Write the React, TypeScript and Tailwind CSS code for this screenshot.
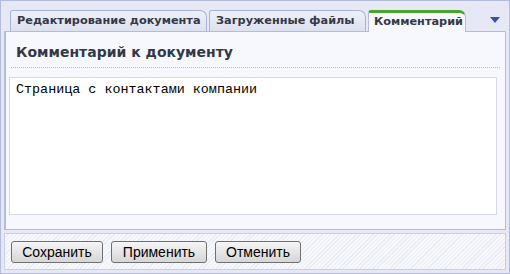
import React from 'react';

const tabs = [
  { label: 'Редактирование документа', w: 'w-[197px]' },
  { label: 'Загруженные файлы', w: 'w-[157px]' },
  { label: 'Комментарий', w: 'w-[98px]' },
];

export default function App() {
  const active = 2;
  return (
    <div className="w-[510px] h-[274px] bg-[#e6e9f5] border border-[#b4bcdb] flex flex-col" style={{ fontFamily: '"DejaVu Sans", Verdana, sans-serif' }}>
      <div className="flex items-end h-[30px] pl-[9px] pr-[6px] gap-[2px]">
        {tabs.map((t, i) =>
          i === active ? (
            <div key={t.label} className={`${t.w} relative -mb-px z-10 h-[22px] pl-[5px] flex items-center bg-[#f7f8fd] border-x border-[#b4bcdb] border-t-[3px] border-t-[#4aa52a] rounded-tl-[3px] rounded-tr-[7px] text-[11.3px] font-bold text-[#343947] whitespace-nowrap`}>
              {t.label}
            </div>
          ) : (
            <div key={t.label} className={`${t.w} h-[21px] pl-[6px] flex items-center bg-gradient-to-b from-[#eef0f8] to-[#dde1ef] border border-b-0 border-[#a9b2d3] rounded-tl-[3px] rounded-tr-[7px] text-[11.3px] font-bold text-[#343947] whitespace-nowrap`}>
              {t.label}
            </div>
          )
        )}
        <div className="ml-auto mb-[8px] mr-[3px]">
          <svg width="10" height="6" viewBox="0 0 10 6">
            <path d="M0 0 H10 L5 6 Z" fill="#2f58a8" />
          </svg>
        </div>
      </div>
      <div className="mx-[3px] h-[199px] bg-[#f7f8fd] border border-[#b4bcdb] border-l-2 flex flex-col px-[3px]">
        <div className="pt-[10px] pl-[7px] h-[35px] text-[14px] font-bold text-[#333848]">Комментарий к документу</div>
        <div className="mx-[2px] border-t border-dotted border-[#b8bdce]"></div>
        <div className="mt-[9px] h-[138px] w-[488px] bg-white border border-[#d6dae6] px-[6px] pt-[2px] text-[13.4px] text-black" style={{ fontFamily: '"Liberation Mono", "Courier New", monospace' }}>
          Страница с контактами компании
        </div>
      </div>
      <div className="mx-[3px] mt-[3px] flex-1 mb-[3px] border border-[#c8cee3] bg-[repeating-linear-gradient(135deg,#f7f8fb_0px,#f7f8fb_2px,#e9ecf4_2px,#e9ecf4_3px)] flex items-center gap-[8px] px-[6px]" style={{ fontFamily: '"Liberation Sans", Arial, sans-serif' }}>
        <button className="h-[22px] w-[92px] border border-[#707070] rounded-[3px] bg-gradient-to-b from-[#f5f5f5] to-[#d6d6d6] text-[14px] text-black">Сохранить</button>
        <button className="h-[22px] w-[96px] border border-[#707070] rounded-[3px] bg-gradient-to-b from-[#f5f5f5] to-[#d6d6d6] text-[14px] text-black">Применить</button>
        <button className="h-[22px] w-[86px] border border-[#707070] rounded-[3px] bg-gradient-to-b from-[#f5f5f5] to-[#d6d6d6] text-[14px] text-black">Отменить</button>
      </div>
    </div>
  );
}
